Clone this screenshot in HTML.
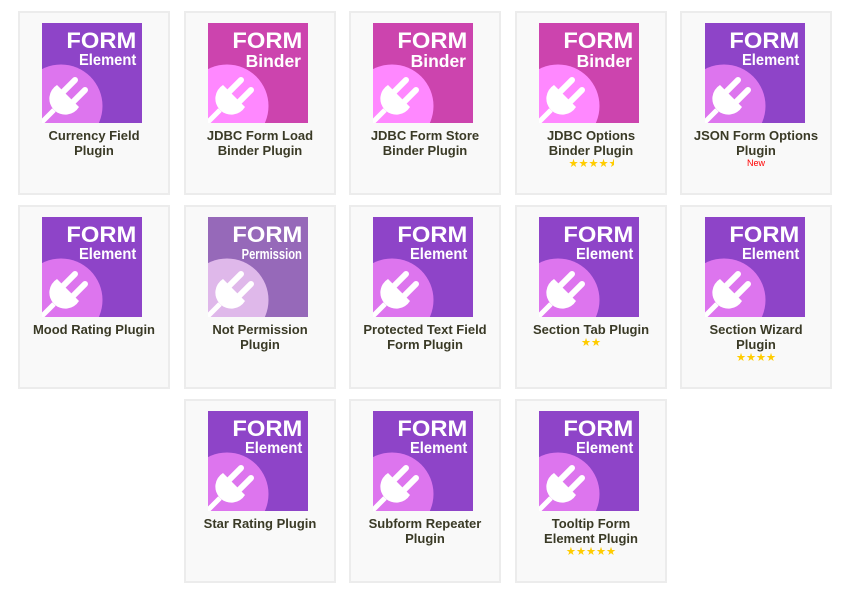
<!DOCTYPE html>
<html><head><meta charset="utf-8">
<style>
html,body{margin:0;padding:0;background:#fff;width:851px;height:604px;overflow:hidden}
body{position:relative;font-family:"Liberation Sans",Arial,sans-serif}
.c{position:absolute;box-sizing:border-box;width:152px;height:184px;background:#f9f9f9;border:2px solid #ececec}
.i{position:absolute;left:22px;top:10px;width:100px;height:100px;overflow:hidden;background:#8e44c8}
.i svg{position:absolute;left:0;top:0}
.i b{position:absolute;right:6px;color:#fff;white-space:nowrap;font-weight:bold}
.f{top:4px;font-size:22.5px;line-height:28px;transform:scaleX(1.055);transform-origin:right center}
.s{top:29px;font-size:16px;line-height:18px;transform:scaleX(.92);transform-origin:right center}
.b .s{transform:none;font-size:17.5px;right:7px;top:28.5px}
.p .s{transform:scaleX(.745);font-size:15px;top:28.5px}
.b{background:#cc44ae}.p{background:#9669b9}
.t{position:absolute;left:0;width:148px;top:115px;text-align:center;font-size:13px;line-height:15px;font-weight:bold;color:#3a3a26}
.r{position:absolute;left:0;width:148px;text-align:center;top:145px;font-size:11.2px;line-height:11px;color:#ffcc00;letter-spacing:0;font-family:"DejaVu Sans",sans-serif}
.n{position:absolute;left:0;width:148px;text-align:center;top:145px;font-size:9px;line-height:10px;color:#f00}
</style></head><body>
<svg width="0" height="0" style="position:absolute"><defs>
<g id="pg" fill="#fff" stroke="#fff" stroke-linecap="round">
<path d="M15 62 L37 84 A16 16 0 1 1 15 62Z" stroke="none"/>
<path d="M20.5 69.5 L33 57 M30.5 79.5 L43 67" stroke-width="6" fill="none"/>
<path d="M12 87 L-1 100" stroke-width="5" stroke-linecap="butt" fill="none"/>
</g>
</defs></svg>

<div class="c" style="left:18px;top:11px"><div class="i"><svg width="100" height="100"><circle cx="19" cy="83" r="41.5" fill="#dd75ee"/><use href="#pg"/></svg><b class="f">FORM</b><b class="s">Element</b></div><div class="t">Currency Field<br>Plugin</div></div>
<div class="c" style="left:184px;top:11px"><div class="i b"><svg width="100" height="100"><circle cx="19" cy="83" r="41.5" fill="#ff88ff"/><use href="#pg"/></svg><b class="f">FORM</b><b class="s">Binder</b></div><div class="t">JDBC Form Load<br>Binder Plugin</div></div>
<div class="c" style="left:349px;top:11px"><div class="i b"><svg width="100" height="100"><circle cx="19" cy="83" r="41.5" fill="#ff88ff"/><use href="#pg"/></svg><b class="f">FORM</b><b class="s">Binder</b></div><div class="t">JDBC Form Store<br>Binder Plugin</div></div>
<div class="c" style="left:515px;top:11px"><div class="i b"><svg width="100" height="100"><circle cx="19" cy="83" r="41.5" fill="#ff88ff"/><use href="#pg"/></svg><b class="f">FORM</b><b class="s">Binder</b></div><div class="t">JDBC Options<br>Binder Plugin</div><div class="r">★★★★<span style="display:inline-block;width:5px;overflow:hidden;vertical-align:top">★</span></div></div>
<div class="c" style="left:680px;top:11px"><div class="i" style="left:23px"><svg width="100" height="100"><circle cx="19" cy="83" r="41.5" fill="#dd75ee"/><use href="#pg"/></svg><b class="f">FORM</b><b class="s">Element</b></div><div class="t">JSON Form Options<br>Plugin</div><div class="n">New</div></div>

<div class="c" style="left:18px;top:205px"><div class="i"><svg width="100" height="100"><circle cx="19" cy="83" r="41.5" fill="#dd75ee"/><use href="#pg"/></svg><b class="f">FORM</b><b class="s">Element</b></div><div class="t">Mood Rating Plugin</div></div>
<div class="c" style="left:184px;top:205px"><div class="i p"><svg width="100" height="100"><circle cx="19" cy="83" r="41.5" fill="#dfb8ea"/><use href="#pg"/></svg><b class="f">FORM</b><b class="s">Permission</b></div><div class="t">Not Permission<br>Plugin</div></div>
<div class="c" style="left:349px;top:205px"><div class="i"><svg width="100" height="100"><circle cx="19" cy="83" r="41.5" fill="#dd75ee"/><use href="#pg"/></svg><b class="f">FORM</b><b class="s">Element</b></div><div class="t">Protected Text Field<br>Form Plugin</div></div>
<div class="c" style="left:515px;top:205px"><div class="i"><svg width="100" height="100"><circle cx="19" cy="83" r="41.5" fill="#dd75ee"/><use href="#pg"/></svg><b class="f">FORM</b><b class="s">Element</b></div><div class="t">Section Tab Plugin</div><div class="r" style="top:130px">★★</div></div>
<div class="c" style="left:680px;top:205px"><div class="i" style="left:23px"><svg width="100" height="100"><circle cx="19" cy="83" r="41.5" fill="#dd75ee"/><use href="#pg"/></svg><b class="f">FORM</b><b class="s">Element</b></div><div class="t">Section Wizard<br>Plugin</div><div class="r">★★★★</div></div>

<div class="c" style="left:184px;top:399px"><div class="i"><svg width="100" height="100"><circle cx="19" cy="83" r="41.5" fill="#dd75ee"/><use href="#pg"/></svg><b class="f">FORM</b><b class="s">Element</b></div><div class="t">Star Rating Plugin</div></div>
<div class="c" style="left:349px;top:399px"><div class="i"><svg width="100" height="100"><circle cx="19" cy="83" r="41.5" fill="#dd75ee"/><use href="#pg"/></svg><b class="f">FORM</b><b class="s">Element</b></div><div class="t">Subform Repeater<br>Plugin</div></div>
<div class="c" style="left:515px;top:399px"><div class="i"><svg width="100" height="100"><circle cx="19" cy="83" r="41.5" fill="#dd75ee"/><use href="#pg"/></svg><b class="f">FORM</b><b class="s">Element</b></div><div class="t">Tooltip Form<br>Element Plugin</div><div class="r">★★★★★</div></div>
</body></html>
